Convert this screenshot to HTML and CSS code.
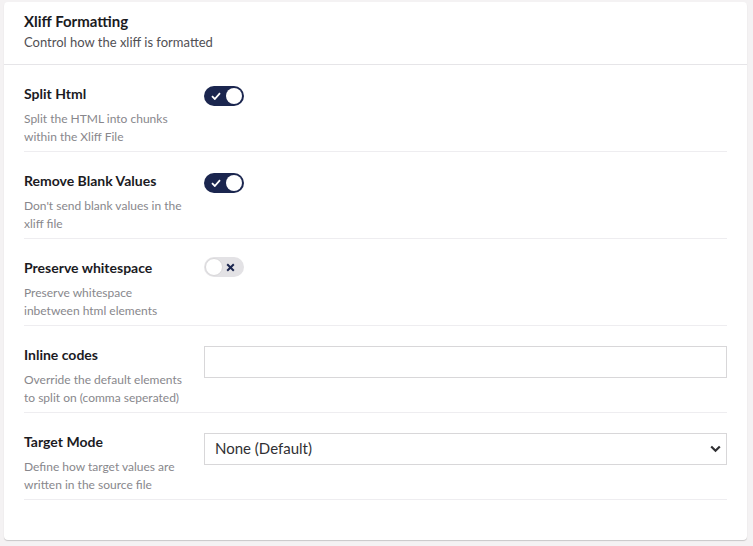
FILE: index.html
```html
<!DOCTYPE html>
<html>
<head>
<meta charset="utf-8">
<link rel="stylesheet" href="styles.css">
</head>
<body>
<div class="card">
  <div class="card-header">
    <div class="title">Xliff Formatting</div>
    <div class="subtitle">Control how the xliff is formatted</div>
  </div>
  <div class="card-body">
    <div class="prop">
      <div class="prop-label">
        <div class="label">Split Html</div>
        <div class="desc">Split the HTML into chunks within the Xliff File</div>
      </div>
      <div class="prop-control">
        <span class="toggle on">
          <svg class="icon-check" width="10" height="8" viewBox="0 0 10 8"><path d="M1 4.2 L3.8 7 L9 1.2" fill="none" stroke="#fff" stroke-width="1.8"/></svg>
          <span class="knob"></span>
        </span>
      </div>
    </div>
    <div class="prop">
      <div class="prop-label">
        <div class="label">Remove Blank Values</div>
        <div class="desc">Don't send blank values in the xliff file</div>
      </div>
      <div class="prop-control">
        <span class="toggle on">
          <svg class="icon-check" width="10" height="8" viewBox="0 0 10 8"><path d="M1 4.2 L3.8 7 L9 1.2" fill="none" stroke="#fff" stroke-width="1.8"/></svg>
          <span class="knob"></span>
        </span>
      </div>
    </div>
    <div class="prop">
      <div class="prop-label">
        <div class="label">Preserve whitespace</div>
        <div class="desc">Preserve whitespace inbetween html elements</div>
      </div>
      <div class="prop-control">
        <span class="toggle off">
          <span class="knob"></span>
          <svg class="icon-x" width="9" height="9" viewBox="0 0 9 9"><path d="M1.2 1.2 L7.8 7.8 M7.8 1.2 L1.2 7.8" fill="none" stroke="#1b264f" stroke-width="2"/></svg>
        </span>
      </div>
    </div>
    <div class="prop">
      <div class="prop-label">
        <div class="label">Inline codes</div>
        <div class="desc">Override the default elements to split on (comma seperated)</div>
      </div>
      <div class="prop-control">
        <input class="text-input" type="text">
      </div>
    </div>
    <div class="prop">
      <div class="prop-label">
        <div class="label">Target Mode</div>
        <div class="desc">Define how target values are written in the source file</div>
      </div>
      <div class="prop-control">
        <div class="select">
          <span class="select-text">None (Default)</span>
          <svg class="chev" width="11" height="8" viewBox="0 0 11 8"><path d="M1.2 1.5 L5.5 5.8 L9.8 1.5" fill="none" stroke="#303033" stroke-width="2.2"/></svg>
        </div>
      </div>
    </div>
  </div>
</div>
</body>
</html>
```

FILE: styles.css
```css
html, body {
  margin: 0;
  padding: 0;
  background: #f4f2f3;
}
body {
  padding: 2px 6px 6px 4px;
  font-family: Lato, "Open Sans", sans-serif;
  color: #1b1b1f;
}
.card {
  background: #fff;
  border-radius: 4px;
  box-shadow: 0 1px 1px rgba(0,0,0,0.18);
  height: 538px;
  box-sizing: border-box;
}
.card-header {
  padding: 9px 20px 0 20px;
  height: 63px;
  box-sizing: border-box;
  border-bottom: 1px solid #e6e5e8;
}
.title {
  font-size: 15px;
  font-weight: 700;
  line-height: 20px;
  color: #1b1b1f;
}
.subtitle {
  font-size: 13px;
  line-height: 20px;
  color: #515054;
  margin-top: 1px;
}
.card-body {
  padding: 0 20px;
}
.prop {
  display: flex;
  padding: 19px 0 5px 0;
  border-bottom: 1px solid #eeedf0;
  height: 87px;
  box-sizing: border-box;
}
.prop-label {
  width: 180px;
  flex: none;
}
.label {
  font-size: 14px;
  font-weight: 700;
  line-height: 20px;
  color: #1b1b1f;
}
.desc {
  font-size: 12px;
  line-height: 18px;
  color: #88878c;
  margin-top: 6px;
  width: 165px;
}
.prop-control {
  flex: 1;
}
.toggle {
  display: inline-flex;
  align-items: center;
  width: 40px;
  height: 20px;
  border-radius: 10px;
  box-sizing: border-box;
  margin-top: -1px;
}
.toggle.on {
  background: #1b264f;
  justify-content: space-between;
  padding: 0 2px 0 7px;
}
.toggle.off {
  background: #e3e2e5;
  justify-content: space-between;
  padding: 0 9px 0 1px;
}
.knob {
  width: 16px;
  height: 16px;
  border-radius: 50%;
  background: #fff;
  display: block;
}
.toggle.off .knob {
  width: 18px;
  height: 18px;
  box-sizing: border-box;
  border: 1px solid #d8d7d9;
}
.icon-check, .icon-x {
  display: block;
}
.text-input {
  display: block;
  width: 100%;
  height: 32px;
  box-sizing: border-box;
  border: 1px solid #d8d7d9;
  margin: 1px 0 0 0;
  padding: 0 11px;
  font-family: Lato, sans-serif;
  font-size: 15px;
  outline: none;
}
.select {
  display: flex;
  align-items: center;
  justify-content: space-between;
  height: 32px;
  box-sizing: border-box;
  border: 1px solid #d8d7d9;
  margin-top: 1px;
  padding: 0 5px 3px 10px;
}
.select-text {
  font-size: 15px;
  color: #303033;
}
.chev {
  display: block;
  margin-top: 3px;
}
```
